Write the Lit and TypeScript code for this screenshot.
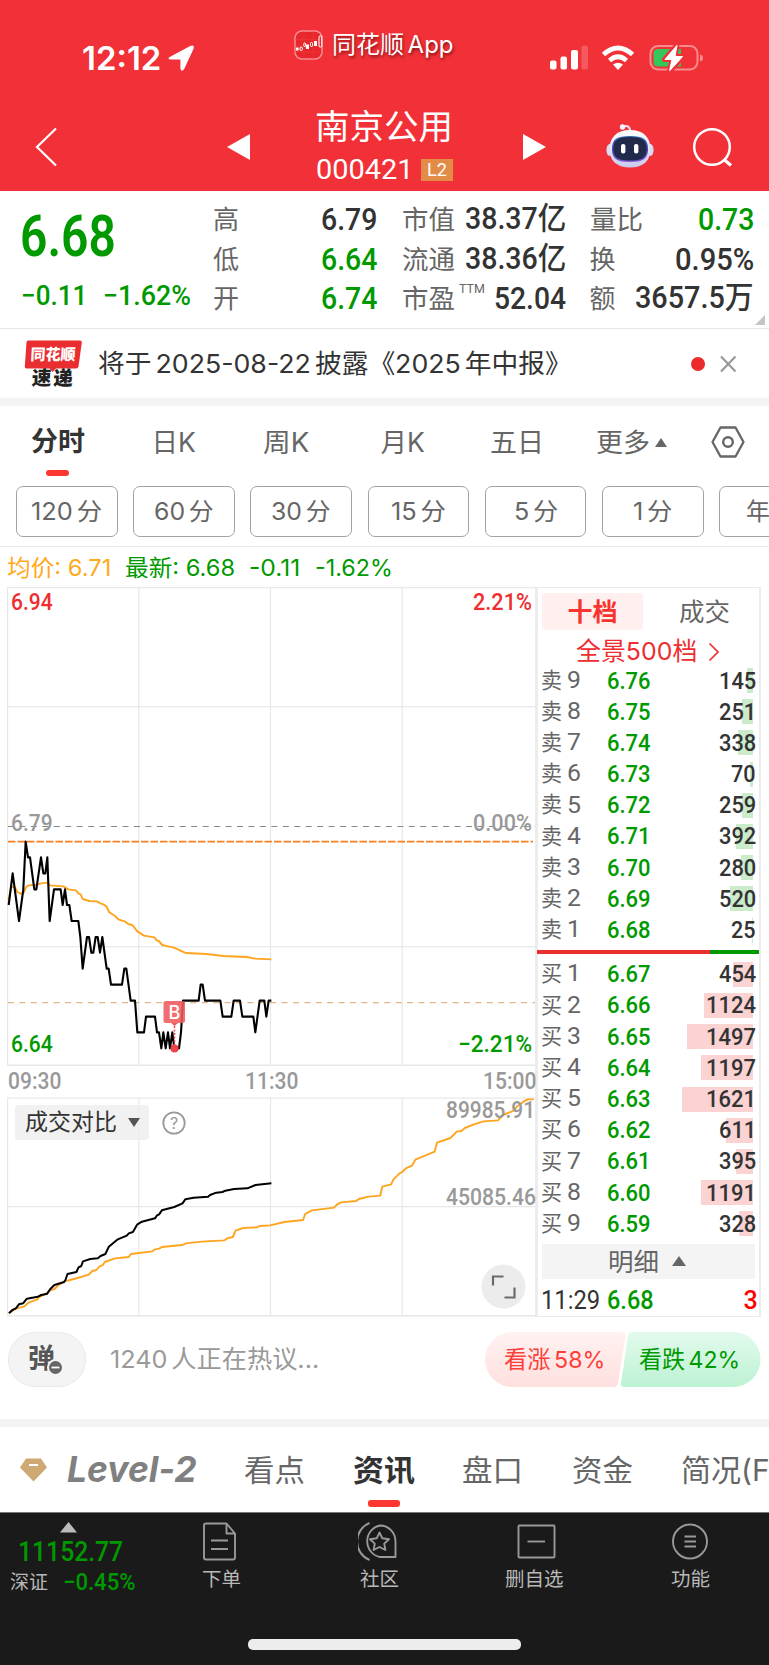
import { LitElement, html, css, svg } from "lit";
import { customElement, property, query } from "lit/decorators.js";

/** A single line of text, condensed or widened to an exact width. */
@customElement("fit-text")
class FitText extends LitElement {
  @property() text = "";
  @property({ type: Number }) size = 16;
  @property({ type: Number }) w = 0;
  @property({ type: Number }) gap = 0;
  @property({ type: Boolean }) spaced = false;
  @query("span") span!: HTMLSpanElement;
  static styles = css`
    :host { display: block; flex: none; line-height: 1.2; white-space: nowrap; }
    span { display: inline-flex; transform-origin: 0 50%; white-space: pre; vertical-align: top; }
    i { font-style: inherit; }
    :host([spaced]) span { gap: 0.15em; }
  `;
  updated() {
    this.style.width = `${this.w}px`;
    this.style.fontSize = `${this.size}px`;
    if (this.gap) this.style.marginLeft = `${this.gap}px`;
    const natural = this.span.offsetWidth;
    if (natural) this.span.style.transform = `scaleX(${this.w / natural})`;
  }
  render() {
    const parts = this.spaced
      ? this.text.split(/(?<=[一-龥])(?=[0-9])|(?<=[0-9])(?=[一-龥])|(?<=[一-龥])(?=A)/)
      : [this.text];
    return html`<span>${parts.map((p) => html`<i>${p}</i>`)}</span>`;
  }
}

const t = (text: string, size: number, w: number, gap = 0, cls = "", spaced = false) =>
  html`<fit-text class=${cls} .text=${text} .size=${size} .w=${w} .gap=${gap} ?spaced=${spaced}></fit-text>`;

const sells: [number, string, number][] = [
  [9, "6.76", 145], [8, "6.75", 251], [7, "6.74", 338], [6, "6.73", 70], [5, "6.72", 259],
  [4, "6.71", 392], [3, "6.70", 280], [2, "6.69", 520], [1, "6.68", 25],
];
const buys: [number, string, number][] = [
  [1, "6.67", 454], [2, "6.66", 1124], [3, "6.65", 1497], [4, "6.64", 1197], [5, "6.63", 1621],
  [6, "6.62", 611], [7, "6.61", 395], [8, "6.60", 1191], [9, "6.59", 328],
];

const pricePts = "26,255 38,160 57,303 70,208 77,65 84,112 90,112 103,208 109,208 123,112 130,160 136,160 142,112 149,303 162,208 182,208 188,255 195,208 201,255 208,255 215,303 235,303 241,351 248,446 261,351 267,351 274,398 280,398 287,351 293,351 300,398 307,351 320,446 326,446 333,494 366,494 373,446 379,446 392,542 405,542 412,637 432,637 438,590 465,590 471,637 477,637 484,685 490,637 497,685 504,637 510,685 517,637 523,685 537,685 543,637 549,542 596,542 602,494 608,494 615,542 661,542 668,590 694,590 701,542 720,542 727,590 760,590 766,637 779,542 793,542 799,590 806,542 814,542";
const avgPts = "26,240 34,200 45,202 52,216 62,221 70,221 78,202 86,196 110,194 123,190 142,188 150,196 190,199 205,208 228,211 236,221 242,223 248,237 268,243 290,244 303,251 312,254 320,260 327,276 345,288 355,298 376,305 385,312 397,315 412,334 432,347 463,352 470,361 476,363 487,375 505,379 522,383 548,395 557,399 620,402 670,408 740,411 765,416 814,418";
const volNow = "26,760 36,750 46,745 55,733 67,730 78,716 110,710 120,705 137,701 146,687 158,675 186,666 190,660 196,642 222,636 228,622 236,618 241,604 262,597 284,595 292,588 306,582 316,560 342,538 368,527 374,520 386,516 398,494 412,485 450,475 456,466 462,463 470,451 506,441 530,430 538,418 562,413 604,410 610,405 628,398 646,396 654,392 680,387 718,385 742,375 788,370";
const volPrev = "26,760 45,746 70,740 84,727 108,719 114,711 136,700 146,691 158,687 170,675 188,664 215,657 258,644 268,633 280,630 290,618 298,616 304,606 334,595 374,591 380,582 442,574 450,568 462,566 470,561 530,555 540,550 586,545 652,541 660,535 676,531 684,512 706,504 746,502 754,498 784,496 826,486 880,480 886,462 906,451 970,443 978,434 990,427 1034,423 1042,417 1070,410 1104,407 1110,380 1136,373 1142,359 1160,340 1168,336 1178,325 1196,317 1206,299 1262,275 1269,248 1308,234 1326,215 1340,213 1350,204 1376,193 1404,184 1446,181 1460,165 1492,152 1500,140 1520,125 1532,118 1550,118";

const line = (pts: string, color: string, w: number) =>
  svg`<polyline points=${pts} fill="none" stroke=${color} stroke-width=${w} stroke-linejoin="round" vector-effect="non-scaling-stroke"/>`;
const rule = (x1: number, y1: number, x2: number, y2: number, w = 1.2) =>
  svg`<line x1=${x1} y1=${y1} x2=${x2} y2=${y2} stroke="#e8e8e8" stroke-width=${w}/>`;

@customElement("app-root")
class AppRoot extends LitElement {
  static styles = css`
    :host { display: block; width: 769px; height: 1665px; overflow: hidden; background: #fff; color: #333;
      font-family: Inter, "Noto Sans CJK SC", sans-serif; }
    * { box-sizing: border-box; }
    svg { display: block; flex: none; }
    .row { display: flex; align-items: center; }
    .d { font-family: Roboto, "Noto Sans CJK SC", sans-serif; font-weight: 500; }
    .n { font-family: Roboto, "Noto Sans CJK SC", sans-serif; font-weight: 400; }
    .g { color: #009900; }
    .r { color: #ee2e30; }
    .k { color: #333; }
    .b { font-weight: 700; }
    .m { font-weight: 600; }
    .l { color: #666; }
    .y { color: #999; }
    .avg { color: #ffa91c; }
    .red { color: #f00; }
    .up { color: #fb4038; }
    .lvl { font-style: italic; font-weight: 700; color: #808080; }

    header { height: 191px; background: #f23037; color: #fff; }
    .status { display: flex; height: 90px; align-items: flex-start; }
    .status .row { height: 40px; }
    .time { margin: 38px 0 0 82px; }
    .time svg { margin-left: 6px; }
    .pill { margin: 25px 0 0 99px; }
    .pill fit-text { text-shadow: 1px 2px 3px rgba(60, 0, 0, 0.6); }
    .sys { margin: 38px 0 0 95px; }
    .wifi { margin-left: 12px; }
    .batt { margin-left: 14px; }
    .nav { display: flex; height: 101px; }
    .nav > .row { height: 60px; margin-top: 27px; }
    .name { width: 138px; margin-left: 66px; padding-top: 19px; }
    .name .row { height: 36px; }
    .name .code { height: 22px; margin-top: 14px; }
    .name .l2 { width: 32px; height: 22px; margin-left: 8px; background: #e28c47; }

    .quote { display: flex; height: 138px; border-bottom: 1.5px solid #e6e6e6; position: relative; }
    .px { width: 213px; }
    .px .row:first-child { height: 64px; margin-top: 14px; }
    .px .row:last-child { height: 30px; margin-top: 12px; }
    .col { padding-top: 9px; }
    .col .row { height: 39.5px; justify-content: space-between; }
    .c1 { width: 164px; }
    .c2 { width: 164px; margin-left: 25px; }
    .c3 { width: 164.5px; margin-left: 23.5px; }
    .ttm { align-self: flex-start; margin-top: 2px; }
    .corner { position: absolute; right: 4px; bottom: 3px; }

    .news { height: 69px; }
    .band { height: 8px; background: #f4f4f4; }
    .tabs { height: 64px; padding-top: 9px; }
    .mark { background: #fb3730; border-radius: 3px; }
    .tabline { height: 16px; }
    .tabline .mark { width: 23px; height: 6px; margin-left: 46px; }
    .periods { height: 61px; gap: 15.6px; padding-left: 16px; overflow: hidden; border-bottom: 1.5px solid #ebebeb; align-items: flex-start; }
    .period { flex: none; width: 101.6px; height: 51px; border: 1.3px solid #a3a3a3; border-radius: 7px; justify-content: center; padding-top: 2px; }
    .legend { height: 40px; padding-top: 3px; }

    .board { display: flex; height: 730px; }
    .charts { width: 529px; margin-left: 7px; }
    .layer { display: grid; }
    .layer > * { grid-area: 1 / 1; }
    .price { height: 479px; }
    .over { display: flex; flex-direction: column; }
    .ends { height: 28px; padding: 0 4px; justify-content: space-between; }
    .p1 { margin-top: 1px; }
    .p2 { margin-top: 193px; }
    .p3 { margin-top: 193px; }
    .times { height: 31px; padding-left: 1px; }
    .vol { height: 220px; }
    .vtop { display: flex; height: 56px; padding: 8px 0 0 8px; }
    .chip { width: 134px; height: 35px; background: rgba(238, 238, 238, 0.85); border-radius: 4px; color: #333; }
    .chip svg { margin-left: 10px; }
    .q { margin: 6px 0 0 13px; }
    .vmax { height: 20px; margin-top: -5px; }
    .vmid { height: 28px; margin-top: 30px; }
    .expand { margin: 53px 0 0 474px; }

    .book { width: 226px; border: 1.5px solid #ebebeb; border-left: 3px solid #ececec; border-right-width: 2px; height: 730px; margin-left: -1px; padding-left: 3px; }
    .btabs { height: 44px; padding-top: 5px; align-items: flex-start; }
    .bt { width: 101px; height: 37px; background: #fff0ef; border-radius: 4px; margin-left: 0.5px; padding-left: 26px; color: #f9332f; }
    .bt2 { height: 37px; }
    .pano { height: 33px; padding-top: 7px; }
    .lv { height: 31.2px; position: relative; }
    .bar { position: absolute; right: 6px; height: 25px; }
    .sell .bar { background: #cbebcb; }
    .buy .bar { background: #fbd3d3; }
    .lv fit-text { position: relative; }
    .qty { flex: 1; justify-content: flex-end; padding-right: 3px; }
    .split { display: flex; height: 4px; margin: 4.5px 0 0 -4px; background: #009900; }
    .split i { width: 173px; background: #e83030; }
    .buy { padding-top: 4.5px; }
    .detail { width: 213px; height: 35px; margin: 5px 0 0 0.5px; background: #f4f4f4; }
    .last { height: 42px; padding-top: 2px; }

    .talk { height: 102px; padding: 15px 0 0 8px; align-items: flex-start; }
    .dan { position: relative; width: 78px; height: 55px; border-radius: 27px; background: #f4f4f4; border: 1.5px solid #eaeaea; color: #555; }
    .badge { position: absolute; left: 38px; top: 26px; }
    .talk > .row { height: 55px; }
    .votes { position: relative; margin-left: 166px; padding-top: 2px; }
    .votes fit-text { position: relative; }
    .votes svg { position: absolute; left: 0; top: 0; }
    .feeds { height: 73px; overflow: hidden; padding-top: 12px; }
    .feedline { height: 12px; }
    .feedline .mark { width: 32px; height: 6.5px; margin: 0 0 5px 368px; }
    footer { height: 154px; background: #1a1a1a; color: #b8b8b8; border-top: 1.5px solid #777; }
    .dock { display: flex; height: 126px; }
    .idx { width: 160px; }
    .idx svg { margin: 9px 0 0 60px; }
    .idx .row { height: 38px; }
    .idx .row + .row { height: 24px; }
    .act { padding-top: 8px; }
    .act svg { height: 40px; }
    .act fit-text { margin-top: 7px; }
    .a1 { margin-left: 41px; }
    .a2 { margin-left: 117px; }
    .a3 { margin-left: 105px; }
    .a4 { margin-left: 106px; }
    .home { width: 273px; height: 10.5px; border-radius: 5px; background: #ededed; margin-left: 248px; }
  `;

  private level(kind: string, [n, p, q]: [number, string, number]) {
    return html`<div class="row lv">
      <div class="bar" style="width:${Math.max(1, q * 0.0438)}px"></div>
      ${t(kind, 21.5, 21.5, 0, "l")}${t(String(n), 23, 14, 4, "l n")}${t(p, 23.5, 44, 26, "d g")}
      <div class="row qty">${t(String(q), 23.5, String(q).length * 12.4, 0, "d k")}</div>
    </div>`;
  }

  private header() {
    return html`<header>
      <div class="status">
        <div class="row time">
          ${t("12:12", 32.5, 79, 0, "m")}
          <svg width="28" height="28" viewBox="0 0 28 28"><path d="M3 13.500 23.500 2.500Q27 1 26 4.500L16.500 25Q14.500 27.500 14 24.500V16Q14 15 13 15H3.500Q1 14.800 3 13.500Z" fill="#fff" stroke="#fff" stroke-width="1.200" stroke-linejoin="round"/></svg>
        </div>
        <div class="row pill">
          <svg width="29" height="30" viewBox="0 0 29 30"><rect x="1" y="1" width="27" height="28" rx="7" fill="#e8272c" stroke="#f78f92" stroke-width="1.500"/><path d="M1 9.500H28M1 16H28M1 22H28M10 1V29M19 1V29" stroke="#ee3a3e" stroke-width=".6"/><g fill="#fff"><rect x="2" y="17.500" width="2.600" height="3"/><rect x="12" y="14.500" width="3" height="4.500"/><rect x="20" y="11" width="3" height="5"/></g><g fill="none" stroke="#fff"><rect x="6" y="17" width="2.300" height="3.500" rx="1"/><rect x="9.800" y="13" width="1.800" height="3.500" rx=".8"/><rect x="16.500" y="12.500" width="2" height="4" rx="1"/><rect x="25" y="6" width="2.800" height="11" rx="1"/></g></svg>
          ${t("同花顺App", 24, 122, 9, "", true)}
        </div>
        <div class="row sys">
          <svg width="40" height="26" viewBox="0 0 40 26"><g fill="#fff"><rect x="1" y="15.500" width="6.500" height="9" rx="2"/><rect x="11.500" y="11.500" width="6.500" height="13" rx="2"/><rect x="22" y="5" width="7" height="19.500" rx="2"/><rect x="32.500" y="0.500" width="6.500" height="24" rx="2" opacity=".2"/></g></svg>
          <svg class="wifi" width="34" height="26" viewBox="0 0 34 26"><g fill="none" stroke="#fff" stroke-width="5"><path d="M2.500 9.500Q17-3.500 31.500 9.500"/><path d="M8.500 15.500Q17 8 25.500 15.500" stroke-width="4.600"/></g><path d="M12 19.500Q17 16 22 19.500L17 25Z" fill="#fff"/></svg>
          <svg class="batt" width="54" height="28" viewBox="0 0 54 28"><rect x="1.500" y="2" width="47" height="23.500" rx="7.500" fill="none" stroke="#f88b8e" stroke-width="2"/><path d="M51 10.500Q54 11 54 14T51 17.500Z" fill="#f88b8e"/><path d="M9 5H32V22.500H9Q4.500 22.500 4.500 18V9.500Q4.500 5 9 5Z" fill="#34c759"/><path d="M28 1 15.500 15.500H23L20.500 27.500 34 12.500H26Z" fill="#fff" stroke="#f23037" stroke-width="5" stroke-linejoin="round" paint-order="stroke"/><path d="M28 1.500 16 15.500H23L20.500 26.500 33.500 12.500H26Z" fill="#fff" stroke="#fff" stroke-linejoin="round"/></svg>
        </div>
      </div>
      <div class="nav">
        <div class="row">
          <svg width="22" height="40" viewBox="0 0 22 40" style="margin-left:35px"><path d="M21 1.500 2 20 21 38.500" fill="none" stroke="#fff" stroke-width="2.200"/></svg>
          <svg width="23" height="26" viewBox="0 0 23 26" style="margin-left:170px"><path d="M23 0V26L0 13Z" fill="#fff"/></svg>
        </div>
        <div class="name">
          <div class="row">${t("南京公用", 34.5, 138, -1)}</div>
          <div class="row code">${t("000421", 28, 97, 0, "n")}<div class="row l2">${t("L2", 19, 20, 6, "n")}</div></div>
        </div>
        <div class="row">
          <svg width="23" height="26" viewBox="0 0 23 26" style="margin-left:69px"><path d="M0 0V26L23 13Z" fill="#fff"/></svg>
          <svg width="48" height="46" viewBox="0 0 48 46" style="margin:-2px 0 0 60px"><defs><linearGradient id="hd" x2="0" y2="1"><stop offset="0" stop-color="#fff"/><stop offset="1" stop-color="#c9c9ec"/></linearGradient><linearGradient id="rim" x2="0" y2="1"><stop offset="0" stop-color="#2b6bb0"/><stop offset=".5" stop-color="#4a3fb0"/><stop offset="1" stop-color="#7d5ad8"/></linearGradient></defs><path d="M17 3.500Q24 1.500 24 8" fill="none" stroke="#f0e0ee" stroke-width="2.200"/><circle cx="16.500" cy="4" r="2.700" fill="#f2f2ff"/><ellipse cx="3.600" cy="27" rx="3.200" ry="6" fill="#d9d9f2"/><ellipse cx="44.400" cy="27" rx="3.200" ry="6" fill="#d9d9f2"/><path d="M24 7C38 7 44.500 15 44.500 26S38 44.500 24 44.500 3.500 37 3.500 26 10 7 24 7Z" fill="url(#hd)"/><path d="M24 13C37 13 42 16 42 26S37 39 24 39 6 36 6 26 11 13 24 13Z" fill="url(#rim)"/><path d="M24 14C36 14 40.500 17 40.500 26S36 37.500 24 37.500 7.500 35 7.500 26 12 14 24 14Z" fill="#222a4c"/><rect x="15" y="21" width="4.400" height="9.500" rx="2" fill="#fff"/><rect x="28" y="21" width="4.400" height="9.500" rx="2" fill="#fff"/></svg>
          <svg width="42" height="42" viewBox="0 0 42 42" style="margin:2px 0 0 38px"><circle cx="20" cy="20" r="17.800" fill="none" stroke="#fff" stroke-width="2.500"/><path d="M31.500 32 39 38.500" stroke="#fff" stroke-width="3.200"/></svg>
        </div>
      </div>
    </header>`;
  }

  private quote() {
    return html`<section class="quote">
      <div class="px">
        <div class="row">${t("6.68", 58, 96, 20, "d g m")}</div>
        <div class="row">${t("−0.11", 28, 66, 21, "d g")}${t("−1.62%", 28, 88, 16, "d g")}</div>
      </div>
      <div class="col c1">
        <div class="row l">${t("高", 26, 26)}${t("6.79", 31, 56, 0, "d k")}</div>
        <div class="row l">${t("低", 26, 26)}${t("6.64", 31, 56, 0, "d g")}</div>
        <div class="row l">${t("开", 26, 26)}${t("6.74", 31, 56, 0, "d g")}</div>
      </div>
      <div class="col c2">
        <div class="row l">${t("市值", 26, 53)}${t("38.37亿", 30.5, 101, 0, "d k")}</div>
        <div class="row l">${t("流通", 26, 53)}${t("38.36亿", 30.5, 101, 0, "d k")}</div>
        <div class="row l">${t("市盈", 26, 53)}${t("TTM", 13, 26, 3, "ttm n")}${t("52.04", 31, 72, 8, "d k")}</div>
      </div>
      <div class="col c3">
        <div class="row l">${t("量比", 26, 53)}${t("0.73", 31, 56, 0, "d g")}</div>
        <div class="row l">${t("换", 26, 26)}${t("0.95%", 31, 79, 0, "d k")}</div>
        <div class="row l">${t("额", 26, 26)}${t("3657.5万", 30.5, 119, 0, "d k")}</div>
      </div>
      <svg class="corner" width="10" height="10"><path d="M10 0V10H0Z" fill="#c4c4c4"/></svg>
    </section>
    <section class="row news">
      <svg width="60" height="52" viewBox="24 337 60 52" style="margin-left:24px"><path d="M28 339.500H80Q82 339.500 81.800 341.500L78.500 365.500Q78 367.500 76 367.500H56L52.500 371 49.500 367.500H26.500Q24.500 367.500 24.800 365.500L26.500 341.500Q26.800 339.500 28 339.500Z" fill="#e92d31"/><text x="30.500" y="359" font-size="15.500" font-weight="900" fill="#fff" textLength="45" lengthAdjust="spacingAndGlyphs" transform="skewX(-3)" style="transform-origin:50px 353px">同花顺</text><text x="32" y="384.500" font-size="19.500" font-weight="900" fill="#222" textLength="41" transform="skewX(-3)" style="transform-origin:50px 377px">速递</text></svg>
      ${t("将于2025-08-22披露《2025年中报》", 26, 474, 14, "k", true)}
      <svg width="72" height="20" viewBox="0 0 72 20" style="margin-left:119px"><circle cx="7" cy="10" r="7" fill="#ea2a2d"/><path d="M30 2.500 44.500 17.500M44.500 2.500 30 17.500" stroke="#999" stroke-width="2.200"/></svg>
    </section>
    <div class="band"></div>`;
  }

  private selectors() {
    const periods: [string, number][] = [["120分", 71], ["60分", 60], ["30分", 60], ["15分", 55], ["5分", 44], ["1分", 39]];
    return html`<nav class="row tabs">
      ${t("分时", 27, 54, 31, "b k")}${t("日K", 26.5, 44, 66.5, "l")}${t("周K", 26.5, 46, 67.5, "l")}${t("月K", 26.5, 44, 71.5, "l")}${t("五日", 26.5, 54, 65, "l")}${t("更多", 26.5, 54, 52.5, "l")}
      <svg width="14" height="10" style="margin-left:4px"><path d="M7 0 13 9H1Z" fill="#666"/></svg>
      <svg width="36" height="34" viewBox="0 0 36 34" style="margin:-1px 0 0 41.500px"><path d="M10.500 2.500H25.500L33.500 17 25.500 31.500H10.500L2.500 17Z" fill="none" stroke="#666" stroke-width="2.300" stroke-linejoin="round"/><circle cx="18" cy="17" r="4.800" fill="none" stroke="#666" stroke-width="2.400"/></svg>
    </nav>
    <div class="tabline"><div class="mark"></div></div>
    <div class="row periods">
      ${periods.map(([p, w]) => html`<div class="row period">${t(p, 24, w, 0, "l", true)}</div>`)}
      <div class="row period">${t("年", 24, 24, -24, "l")}</div>
    </div>
    <div class="row legend">
      ${t("均价: 6.71", 23, 104, 7, "avg")}${t("最新: 6.68", 23, 110, 14, "g")}${t("-0.11", 23, 51.5, 14, "g")}${t("-1.62%", 23, 78, 14, "g")}
    </div>`;
  }

  private board() {
    return html`<section class="board">
      <div class="charts">
        <div class="layer price">
          <svg width="529" height="479" viewBox="7 587 529 479">
            ${rule(7, 587.6, 536, 587.6)}${rule(7, 706.7, 536, 706.7)}${rule(7, 946.7, 536, 946.7)}${rule(7, 1065.2, 536, 1065.2, 1.6)}
            ${rule(7.6, 587, 7.6, 1066)}${rule(138.8, 587, 138.8, 1066)}${rule(270.5, 587, 270.5, 1066)}${rule(402.2, 587, 402.2, 1066)}
            <line x1="8" x2="535" y1="826.500" y2="826.500" stroke="#888" stroke-width="1.200" stroke-dasharray="6 5.450"/>
            <line x1="8" x2="533" y1="841.600" y2="841.600" stroke="#f77f1e" stroke-width="1.900" stroke-dasharray="7.500 2"/>
            <line x1="8" x2="535" y1="1002.600" y2="1002.600" stroke="#e0b888" stroke-width="1.300" stroke-dasharray="6 5.400"/>
            <g transform="translate(0 820) scale(.33333)">${line(avgPts, "#ffa41f", 1.9)}${line(pricePts, "#000", 2.1)}</g>
            <rect x="163.500" y="1001" width="21.500" height="22" rx="2" fill="#ee5a5e" opacity=".88"/>
            <path d="M171 1023H178L174.500 1026Z" fill="#ee5a5e"/>
            <text x="174.300" y="1018.500" font-size="18" font-weight="500" fill="#fff" text-anchor="middle">B</text>
            <path d="M174.500 1026V1045" stroke="#ee4a4e" stroke-width="1.500" stroke-dasharray="2 1.500"/><circle cx="174.500" cy="1048.500" r="4" fill="#ee4248"/>
          </svg>
          <div class="over">
            <div class="row ends p1">${t("6.94", 23.5, 42, 0, "d r")}${t("2.21%", 23.5, 59, 0, "d r")}</div>
            <div class="row ends p2">${t("6.79", 23.5, 42, 0, "d y")}${t("0.00%", 23.5, 59, 0, "d y")}</div>
            <div class="row ends p3">${t("6.64", 23.5, 42, 0, "d g")}${t("−2.21%", 23.5, 74, 0, "d g")}</div>
          </div>
        </div>
        <div class="row times">${t("09:30", 23, 53, 0, "d y")}${t("11:30", 23, 53, 184, "d y")}${t("15:00", 23, 53, 185, "d y")}</div>
        <div class="layer vol">
          <svg width="529" height="220" viewBox="7 1097 529 220">
            ${rule(7, 1098.2, 536, 1098.2)}${rule(7, 1206.7, 536, 1206.7)}${rule(7, 1315.7, 536, 1315.7, 1.6)}
            ${rule(7.6, 1097, 7.6, 1316)}${rule(138.8, 1097, 138.8, 1316)}${rule(270.5, 1097, 270.5, 1316)}${rule(402.2, 1097, 402.2, 1316)}
            <g transform="translate(0 1060) scale(.3444 .33333)">${line(volPrev, "#ffa41f", 1.9)}${line(volNow, "#000", 2)}</g>
          </svg>
          <div class="over">
            <div class="vtop">
              <div class="row chip">${t("成交对比", 23, 92, 10)}<svg width="14" height="9"><path d="M1 0H13L7 9Z" fill="#555"/></svg></div>
              <svg class="q" width="24" height="24" viewBox="0 0 24 24"><circle cx="12" cy="12" r="10.700" fill="none" stroke="#999" stroke-width="1.800"/><text x="12" y="17.800" font-size="16" fill="#999" text-anchor="middle">?</text></svg>
              <div class="row vmax">${t("89985.91", 23.5, 89, 260, "d y")}</div>
            </div>
            <div class="row vmid">${t("45085.46", 23.5, 90, 439, "d y")}</div>
            <svg class="expand" width="45" height="45" viewBox="0 0 45 45"><circle cx="22.500" cy="22.500" r="22" fill="#ececec"/><path d="M12 21.500V12.500H22.500M23.500 33.500H33.500V23.500" fill="none" stroke="#6a6a6a" stroke-width="2.200"/></svg>
          </div>
        </div>
      </div>
      <div class="book">
        <div class="row btabs"><div class="row bt">${t("十档", 25, 50, 0, "b")}</div><div class="row bt2">${t("成交", 25, 51, 36.5, "l")}</div></div>
        <div class="row pano r">${t("全景500档", 24.5, 121, 34.5)}<svg width="12" height="20" viewBox="0 0 12 20" style="margin-left:11px"><path d="M1.500 1.500 10 10 1.500 18.500" fill="none" stroke="#ee2e30" stroke-width="1.700"/></svg></div>
        <div class="sell">${sells.map((r) => this.level("卖", r))}</div>
        <div class="split"><i></i></div>
        <div class="buy">${buys.map((r) => this.level("买", r))}</div>
        <div class="row detail l">${t("明细", 25, 51, 66)}<svg width="14" height="11" style="margin-left:13px"><path d="M7 0 14 10H0Z" fill="#666"/></svg></div>
        <div class="row last">${t("11:29", 25, 59, 0, "n k")}${t("6.68", 25, 47, 6.5, "d g")}${t("3", 25, 14, 90, "d red")}</div>
      </div>
    </section>`;
  }

  render() {
    return html`
      ${this.header()}${this.quote()}${this.selectors()}${this.board()}
      <section class="row talk">
        <div class="row dan">${t("弹", 27, 27, 19, "b")}
          <svg class="badge" width="17" height="17" viewBox="0 0 17 17"><circle cx="8.500" cy="8.500" r="7.500" fill="#666" stroke="#f4f4f4" stroke-width="2"/><path d="M4.500 8.500H12.500" stroke="#fff" stroke-width="1.800"/></svg></div>
        <div class="row">${t("1240人正在热议...", 24.5, 209, 24, "y", true)}</div>
        <div class="row votes">
          <svg width="277" height="55" viewBox="0 0 277 55"><defs><linearGradient id="up" x2="0" y2="1"><stop offset="0" stop-color="#fff2f1"/><stop offset="1" stop-color="#fee0df"/></linearGradient><linearGradient id="dn" x2="0" y2="1"><stop offset="0" stop-color="#e2faec"/><stop offset="1" stop-color="#bdf2d4"/></linearGradient></defs><path d="M27.500 0H137Q141 0 140.500 4L133 51Q132.300 55 128.500 55H27.500A27.500 27.500 0 0 1 27.500 0Z" fill="url(#up)"/><path d="M148 0H248A27.500 27.500 0 0 1 248 55H139Q135.500 55 136 51L143 4Q144 0 148 0Z" fill="url(#dn)"/></svg>
          ${t("看涨58%", 23.5, 101, 19, "up", true)}${t("看跌42%", 23.5, 101, 34, "g", true)}
        </div>
      </section>
      <div class="band"></div>
      <nav class="row feeds l">
        <svg width="28" height="25" viewBox="0 0 28 25" style="margin-left:20px"><path d="M6 1.500H21L27 10.500 13.500 24.500 0 10.500Z" fill="#cfa974"/><path d="M9 8H18" stroke="#fff" stroke-width="2"/></svg>
        ${t("Level-2", 36, 130, 19, "lvl")}${t("看点", 30, 61, 47)}${t("资讯", 30, 62, 48, "b k")}${t("盘口", 30, 61, 47)}${t("资金", 30, 61, 49)}${t("简况(F10)", 30, 131, 48)}
      </nav>
      <div class="feedline"><div class="mark"></div></div>
      <footer>
        <div class="dock">
          <div class="idx">
            <svg width="17" height="11"><path d="M8.500 0 17 10.500H0Z" fill="#bbb"/></svg>
            <div class="row">${t("11152.77", 28, 105, 18, "d g")}</div>
            <div class="row">${t("深证", 19.5, 38, 10)}${t("−0.45%", 23, 72, 15, "d g")}</div>
          </div>
          <div class="act a1"><svg width="39" height="40" viewBox="0 0 39 40"><path d="M25.500 2.500H5Q3 2.500 3 4.500V36.500Q3 38.500 5 38.500H32Q34 38.500 34 36.500V12.500ZM25.500 2.500V12.500H34" fill="none" stroke="#999" stroke-width="1.900" stroke-linejoin="round"/><path d="M10 19.500H27M10 28H27" stroke="#999" stroke-width="1.900"/></svg>${t("下单", 19.5, 39, 1)}</div>
          <div class="act a2"><svg width="42" height="40" viewBox="0 0 42 40"><g fill="none" stroke="#999" stroke-width="1.900" stroke-linejoin="round"><path d="M22 4.500A15.500 16 0 0 1 37.500 20.500V36H22A15.500 16 0 0 1 22 4.500Z"/><path d="M11.500 2A20 20 0 0 0 11.500 39"/><path d="M21.500 11.500 24.300 17.300 31 18.200 26.200 22.600 27.400 29 21.500 26 15.600 29 16.800 22.600 12 18.200 18.700 17.300Z"/></g></svg>${t("社区", 19.5, 39, 2)}</div>
          <div class="act a3"><svg width="60" height="40" viewBox="0 0 60 40"><rect x="13.500" y="4.500" width="36" height="32" rx="1" fill="none" stroke="#999" stroke-width="1.900"/><path d="M22.500 20.500H40" stroke="#999" stroke-width="1.900"/></svg>${t("删自选", 19.5, 59)}</div>
          <div class="act a4"><svg width="40" height="40" viewBox="0 0 40 40"><circle cx="19" cy="20.500" r="17" fill="none" stroke="#999" stroke-width="1.900"/><path d="M13.500 15.500H25M13.500 20.500H25M13.500 25.500H25" stroke="#999" stroke-width="1.900"/></svg>${t("功能", 19.5, 39)}</div>
        </div>
        <div class="home"></div>
      </footer>`;
  }
}
